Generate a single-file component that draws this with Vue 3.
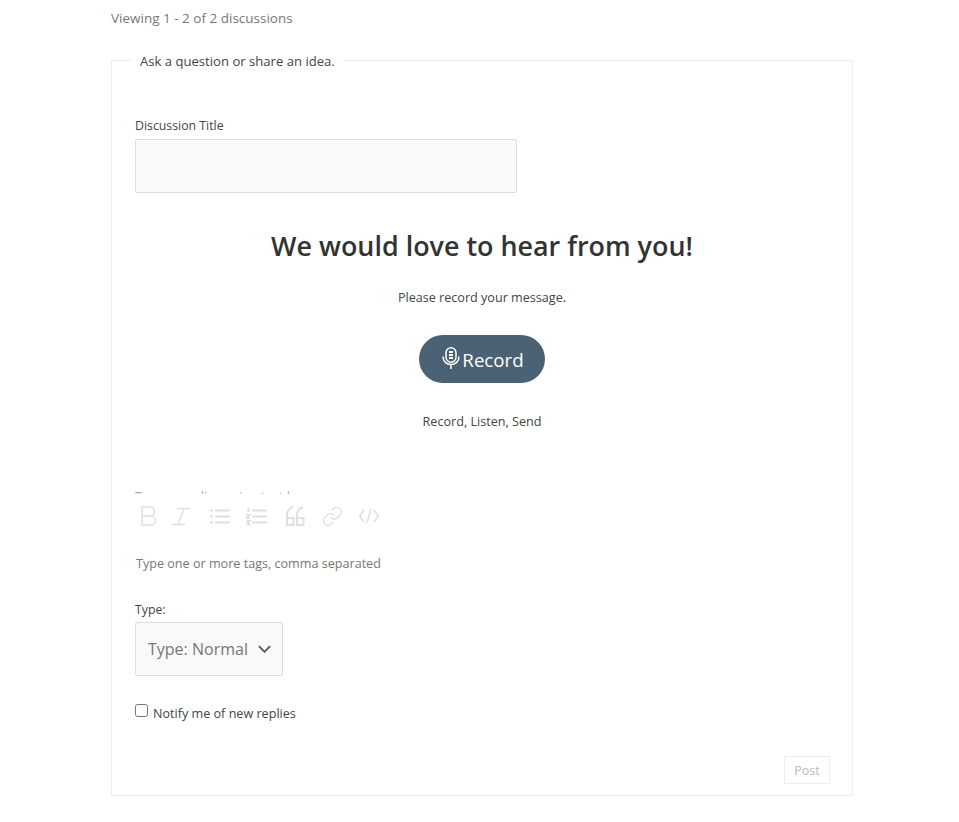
<template>
  <div class="page">
    <p class="viewing">Viewing 1 - 2 of 2 discussions</p>

    <fieldset class="new-topic">
      <legend>Ask a question or share an idea.</legend>

      <label class="field-label" for="title">Discussion Title</label>
      <input id="title" class="title-input" type="text" />

      <div class="recorder">
        <h2>We would love to hear from you!</h2>
        <p class="prompt">Please record your message.</p>
        <button class="record-btn" type="button">
          <svg class="mic" viewBox="0 0 18 22" fill="none" stroke="#fff" stroke-width="1.5">
            <rect x="4" y="0.8" width="10" height="14.5" rx="5" />
            <path d="M7 5h4M7 8h4M7 11h4" stroke-width="1.8" />
            <path d="M1 9.500c0 5 3.500 8 8 8s8-3 8-8M9 17.500V22" />
          </svg>
          <span>Record</span>
        </button>
        <p class="steps">Record, Listen, Send</p>
      </div>

      <div class="clipped-label"><span>Type your discussion text here</span></div>

      <div class="toolbar">
        <svg v-for="icon in icons" :key="icon.name" class="tool" :style="{ width: icon.w + 'px' }" :viewBox="`0 0 ${icon.w} 20`" fill="none" stroke="#dcdfe3" :stroke-width="icon.sw || 1.5">
          <path :d="icon.d" :transform="icon.transform" />
        </svg>
      </div>

      <p class="tags">Type one or more tags, comma separated</p>

      <label class="field-label type-label" for="type">Type:</label>
      <div class="select-box">
        <span>Type: Normal</span>
        <svg viewBox="0 0 14 8" fill="none" stroke="#555" stroke-width="2"><path d="M1 1l6 6 6-6" /></svg>
      </div>

      <label class="notify">
        <input type="checkbox" />
        <span>Notify me of new replies</span>
      </label>

      <div class="actions">
        <button class="post" type="button" disabled>Post</button>
      </div>
    </fieldset>
  </div>
</template>

<script setup>
const icons = [
  { name: 'bold', w: 16, d: 'M1 1h8a4.500 4.500 0 010 9H1zM1 10h9a4.500 4.500 0 010 9H1z' },
  { name: 'italic', w: 22, d: 'M5 2.500h13M12 2.500L6 18.500M0 18.500h13' },
  { name: 'ul', w: 22, sw: 1.8, d: 'M6 4.500h15M6 10.500h15M6 16.500h15M1 4.500h3M1 10.500h3M1 16.500h3' },
  { name: 'ol', w: 25, sw: 1.8, d: 'M6 4.500h15M6 10.500h15M6 16.500h15M1.500 2.500h1v3.500M0.500 9h3l-3 3h3M0.500 15h3l-1.500 1.500 1.500 2h-3' },
  { name: 'quote', w: 22, sw: 2, d: 'M1 19V9c0-4 2-6.500 6-8M1 12h6.500v7H1zM11 19V9c0-4 2-6.500 6-8M11 12h6.500v7H11z' },
  { name: 'link', w: 21, d: 'M10 13a5 5 0 0 0 7.540.54l3-3a5 5 0 0 0-7.070-7.070l-1.720 1.710M14 11a5 5 0 0 0-7.540-.54l-3 3a5 5 0 0 0 7.070 7.070l1.710-1.710', transform: 'translate(-1.5 -0.5) scale(.9)' },
  { name: 'code', w: 20, d: 'M5 4L.7 10 5 16M15 4l4.300 6L15 16M12 3L8 17' }
]
</script>

<style>
body {
  background: #fff;
}
</style>

<style scoped>
.page {
  width: 742px;
  margin-left: 111px;
  padding-bottom: 26px;
  font-family: "Open Sans", "Noto Sans", sans-serif;
  font-size: 12.6px;
  color: #444;
}

.viewing {
  margin: 0;
  padding-top: 10px;
  height: 41px;
  line-height: 17px;
  font-size: 13.5px;
  color: #777;
}

.new-topic {
  margin: 0;
  padding: 47px 23px 11px;
  border: 1px solid #eee;
  min-width: 0;
  height: 745px;
  box-sizing: border-box;
}

legend {
  margin-left: -3px;
  padding: 2px 8px 0;
  font-size: 13.1px;
  line-height: 17px;
  color: #444;
}

.field-label {
  display: block;
  line-height: 17px;
  font-size: 12.3px;
}

.title-input {
  display: block;
  box-sizing: border-box;
  width: 382px;
  height: 54px;
  margin-top: 5px;
  background: #f9f9f9;
  border: 1px solid #ddd;
  border-radius: 2px;
}

.recorder {
  margin-top: 35px;
  text-align: center;
}

.recorder h2 {
  margin: 0;
  font-size: 26.9px;
  line-height: 36px;
  font-weight: 600;
  color: #333;
}

.prompt {
  margin: 25px 0 0;
  line-height: 17px;
}

.record-btn {
  display: inline-flex;
  align-items: center;
  justify-content: center;
  gap: 2px;
  width: 126px;
  height: 48px;
  margin-top: 29px;
  padding: 0 0 0 2px;
  border: 0;
  border-radius: 24px;
  background: #4b6274;
  color: #fff;
  font-family: inherit;
  font-size: 18.7px;
}

.mic {
  width: 18px;
  height: 22px;
  margin-top: -3px;
}

.steps {
  margin: 30px 0 0;
  line-height: 17px;
}

.clipped-label {
  height: 3px;
  margin-top: 61px;
  overflow: hidden;
  line-height: 17px;
  color: #aaa;
}

.clipped-label span {
  display: block;
  margin-top: -3px;
}

.toolbar {
  display: flex;
  align-items: center;
  gap: 15px;
  height: 20px;
  margin-top: 12px;
  padding-left: 6px;
}

.tool {
  height: 20px;
}

.tags {
  margin: 29px 0 0 1px;
  line-height: 17px;
  color: #777;
}

.type-label {
  margin-top: 29px;
}

.select-box {
  display: flex;
  align-items: center;
  justify-content: space-between;
  box-sizing: border-box;
  width: 148px;
  height: 54px;
  margin-top: 4px;
  padding: 0 11px 0 12px;
  background: #f9f9f9;
  border: 1px solid #ddd;
  border-radius: 2px;
  font-size: 16px;
  color: #777;
}

.select-box svg {
  width: 13px;
  height: 8px;
}

.notify {
  display: flex;
  align-items: flex-start;
  margin-top: 28px;
  line-height: 17px;
}

.notify input {
  width: 13px;
  height: 13px;
  margin: 0 5px 0 0;
}

.notify span {
  padding-top: 1px;
}

.actions {
  display: flex;
  justify-content: flex-end;
  margin-top: 34px;
  margin-right: -1px;
}

.post {
  box-sizing: border-box;
  width: 46px;
  height: 28px;
  background: #fff;
  border: 1px solid #eee;
  color: #bbb;
  font-family: inherit;
  font-size: 12.5px;
}
</style>
